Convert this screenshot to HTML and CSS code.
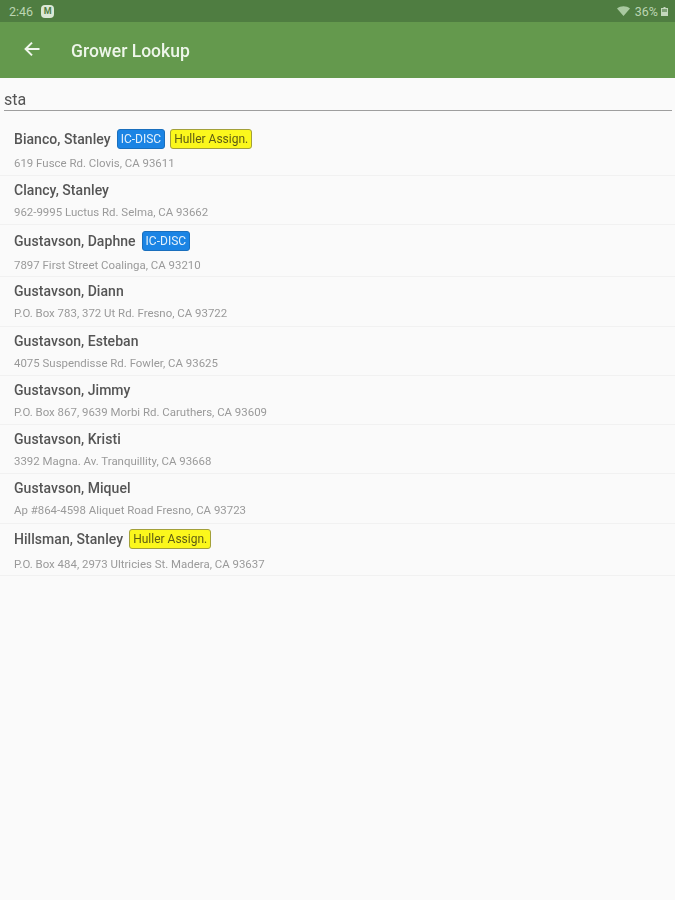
FILE: index.html
```html
<!DOCTYPE html>
<html lang="en">
<head>
<meta charset="utf-8">
<title>Grower Lookup</title>
<link rel="stylesheet" href="styles.css">
</head>
<body>
<div class="status">
  <div class="status-left">
    <span class="clock">2:46</span>
    <span class="notif">M</span>
  </div>
  <div class="status-right">
    <svg class="wifi" width="13" height="10" viewBox="0 0 13 10"><path d="M0 2.6C3.6-.6 9.4-.6 13 2.6L6.5 10z" fill="#a9c9a0"/></svg>
    <span class="batt-text">36%</span>
    <svg class="batt" width="7" height="9" viewBox="0 0 7 9"><path d="M2.5 0h2v1H7v8H0V1h2.500z" fill="#c4d8bd"/><path d="M1 2h5v3H1z" fill="#7fa277"/></svg>
  </div>
</div>
<header class="appbar">
  <svg class="back" width="16" height="16" viewBox="0 0 16 16"><path d="M15.500 8H2M8 1.600 1.600 8 8 14.400" fill="none" stroke="#f1f7ee" stroke-width="2"/></svg>
  <h1 class="title">Grower Lookup</h1>
</header>
<div class="search"><div class="search-input">sta</div></div>
<ul class="list">
  <li class="row row-badge">
    <div class="name-line"><span class="name">Bianco, Stanley</span><span class="badge blue">IC-DISC</span><span class="badge yellow">Huller Assign.</span></div>
    <div class="addr">619 Fusce Rd. Clovis, CA 93611</div>
  </li>
  <li class="row">
    <div class="name-line"><span class="name">Clancy, Stanley</span></div>
    <div class="addr">962-9995 Luctus Rd. Selma, CA 93662</div>
  </li>
  <li class="row row-badge">
    <div class="name-line"><span class="name">Gustavson, Daphne</span><span class="badge blue">IC-DISC</span></div>
    <div class="addr">7897 First Street Coalinga, CA 93210</div>
  </li>
  <li class="row">
    <div class="name-line"><span class="name">Gustavson, Diann</span></div>
    <div class="addr">P.O. Box 783, 372 Ut Rd. Fresno, CA 93722</div>
  </li>
  <li class="row">
    <div class="name-line"><span class="name">Gustavson, Esteban</span></div>
    <div class="addr">4075 Suspendisse Rd. Fowler, CA 93625</div>
  </li>
  <li class="row">
    <div class="name-line"><span class="name">Gustavson, Jimmy</span></div>
    <div class="addr">P.O. Box 867, 9639 Morbi Rd. Caruthers, CA 93609</div>
  </li>
  <li class="row">
    <div class="name-line"><span class="name">Gustavson, Kristi</span></div>
    <div class="addr">3392 Magna. Av. Tranquillity, CA 93668</div>
  </li>
  <li class="row">
    <div class="name-line"><span class="name">Gustavson, Miquel</span></div>
    <div class="addr">Ap #864-4598 Aliquet Road Fresno, CA 93723</div>
  </li>
  <li class="row row-badge">
    <div class="name-line"><span class="name">Hillsman, Stanley</span><span class="badge yellow">Huller Assign.</span></div>
    <div class="addr">P.O. Box 484, 2973 Ultricies St. Madera, CA 93637</div>
  </li>
</ul>
</body>
</html>
```
FILE: styles.css
```css
* { box-sizing: border-box; }
html, body { margin: 0; padding: 0; }
body {
  width: 675px;
  height: 900px;
  overflow: hidden;
  background: #fafafa;
  font-family: Roboto, "Liberation Sans", sans-serif;
  filter: blur(0.4px);
}
.status {
  height: 22px;
  background: #4f7d41;
  display: flex;
  justify-content: space-between;
  align-items: center;
  padding: 0 7px 0 9px;
  color: #bcd5b3;
  font-size: 12.5px;
}
.status-left, .status-right { display: flex; align-items: center; }
.notif {
  width: 13px;
  height: 13px;
  margin-left: 8px;
  border-radius: 4px;
  background: #dbe8d6;
  color: #4f7d41;
  font-size: 9px;
  font-weight: 700;
  line-height: 13px;
  text-align: center;
}
.wifi { margin-right: 5px; }
.batt { margin-left: 3px; }
.appbar {
  height: 56px;
  background: #64994d;
  display: flex;
  align-items: center;
  padding-left: 24px;
}
.back { margin-top: -3px; }
.title {
  margin: 2px 0 0 31px;
  font-size: 17.5px;
  font-weight: 500;
  color: #eef6ea;
}
.search {
  height: 48px;
  padding: 12px 3px 0 4px;
  background: #fafafa;
}
.search-input {
  height: 21px;
  border-bottom: 1px solid #9e9e9e;
  font-size: 16px;
  line-height: 19px;
  color: #555;
}
.list { list-style: none; margin: 0; padding: 0; }
.row {
  height: 49.25px;
  padding: 2px 14px 0;
  border-bottom: 1px solid #f1f1f1;
}
.row-badge { height: 52px; padding-top: 3px; }
.list .row:first-child { height: 50px; padding-top: 0; }
.name-line {
  display: flex;
  align-items: center;
  height: 24px;
}
.row-badge .name-line { height: 25px; }
.name {
  font-size: 14px;
  font-weight: 500;
  color: #555;
  letter-spacing: 0.05px;
}
.addr {
  margin-top: 3px;
  font-size: 11.45px;
  line-height: 14px;
  color: #9a9a9a;
}
.row-badge .addr { margin-top: 5px; }
.badge {
  display: inline-block;
  height: 20px;
  margin-left: 5px;
  padding: 0 3px;
  border-radius: 3px;
  font-size: 12px;
  line-height: 18px;
}
.name + .badge { margin-left: 6px; }
.blue {
  background: #1b84e4;
  color: #e3f0fb;
  border: 1px solid #1a6fbd;
}
.yellow {
  background: #fbf71c;
  color: #5f5d14;
  border: 1px solid #a3a03a;
}
```
